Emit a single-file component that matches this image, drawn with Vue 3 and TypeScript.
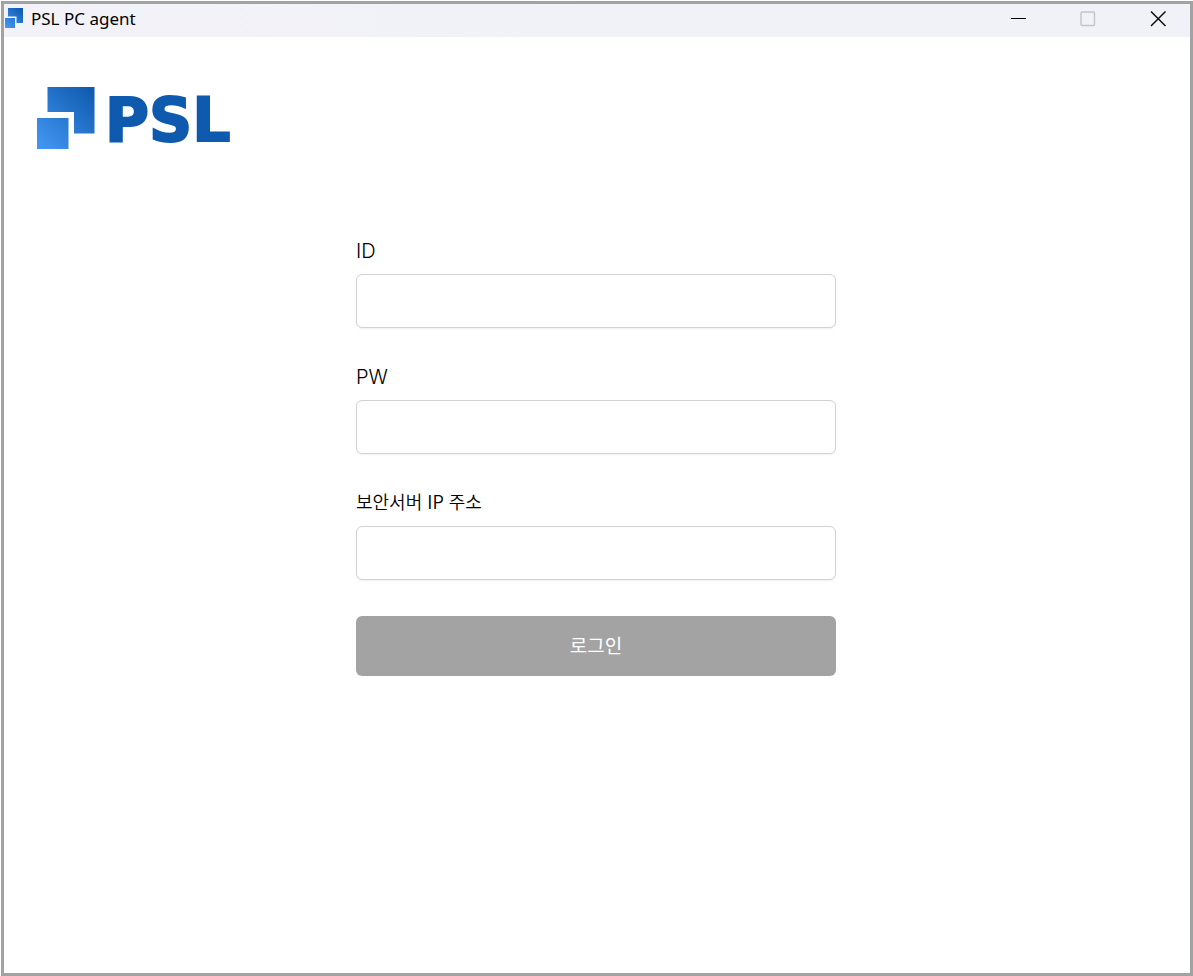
<script setup lang="ts">
import { computed, ref } from 'vue'

interface Field {
  id: string
  label: string
  type: string
  lang: string
}

const fields: Field[] = [
  { id: 'user-id', label: 'ID', type: 'text', lang: 'en' },
  { id: 'user-pw', label: 'PW', type: 'password', lang: 'en' },
  { id: 'server-ip', label: '보안서버 IP 주소', type: 'text', lang: 'ko' },
]

const values = ref<Record<string, string>>({ 'user-id': '', 'user-pw': '', 'server-ip': '' })
const ready = computed(() => fields.every((f) => values.value[f.id].trim() !== ''))
</script>

<template>
  <div class="window">
    <header class="titlebar">
      <svg class="app-icon" viewBox="0 0 18 20" aria-hidden="true">
        <defs>
          <linearGradient id="mark-small" gradientUnits="userSpaceOnUse" x1="1" y1="19" x2="17" y2="1">
            <stop offset="0" stop-color="#4398f4" />
            <stop offset="1" stop-color="#0d5aae" />
          </linearGradient>
        </defs>
        <path d="M3 0H18V15H11.500V8.500H3ZM0 10H10V20H0Z" fill="url(#mark-small)" />
      </svg>
      <span class="title">PSL PC agent</span>
      <div class="controls">
        <button type="button" aria-label="Minimize">
          <svg viewBox="0 0 16 16"><path d="M0 7.500H15" stroke="#000" /></svg>
        </button>
        <button type="button" aria-label="Maximize" disabled>
          <svg viewBox="0 0 16 16">
            <rect x="1" y="1" width="13.500" height="13.500" rx="1" fill="none" stroke="#c4c5c9" stroke-width="1.400" />
          </svg>
        </button>
        <button type="button" aria-label="Close">
          <svg viewBox="0 0 16 16"><path d="M1 .5L15.500 15M15.500 .5L1 15" stroke="#111" stroke-width="1.500" /></svg>
        </button>
      </div>
    </header>

    <main class="content">
      <div class="logo">
        <svg class="mark" viewBox="0 0 58 62" aria-hidden="true">
          <defs>
            <linearGradient id="mark-large" gradientUnits="userSpaceOnUse" x1="3" y1="60" x2="56" y2="2">
              <stop offset="0" stop-color="#4296f3" />
              <stop offset="1" stop-color="#0e5aad" />
            </linearGradient>
          </defs>
          <path d="M10.500 0H57.500V46.500H37V25H10.500ZM0 31H31.500V62H0Z" fill="url(#mark-large)" />
        </svg>
        <span class="wordmark">PSL</span>
      </div>

      <form class="login" @submit.prevent>
        <div v-for="field in fields" :key="field.id" class="field">
          <label :for="field.id" :lang="field.lang">{{ field.label }}</label>
          <input :id="field.id" v-model="values[field.id]" :type="field.type" />
        </div>
        <button class="submit" type="submit" :disabled="!ready">로그인</button>
      </form>
    </main>
  </div>
</template>

<style>
body {
  margin: 0;
  background: #fff;
}
</style>

<style scoped>
.window {
  box-sizing: border-box;
  display: flex;
  flex-direction: column;
  min-height: calc(100vh - 1px);
  margin: 1px 0 0 1px;
  border: 3px solid #a1a2a2;
  background: #fff;
  font-family: "Noto Sans CJK KR", sans-serif;
}

.titlebar {
  display: flex;
  align-items: center;
  height: 33px;
  padding-left: 1px;
  background: linear-gradient(90deg, #f2f2f8, #f0f2f7);
}

.app-icon {
  width: 18px;
  height: 20px;
  margin-bottom: 6px;
}

.title {
  margin-left: 8px;
  padding-bottom: 4px;
  color: #000;
  font: 17px/24px "Noto Sans", "Open Sans", sans-serif;
}

.controls {
  display: flex;
  margin-left: auto;
}

.controls button {
  display: flex;
  align-items: center;
  justify-content: center;
  width: 69px;
  height: 30px;
  margin-bottom: 4px;
  padding: 0;
  border: 0;
  background: none;
}

.controls button:last-child {
  width: 64px;
  margin-left: 4px;
}

.controls svg {
  width: 16px;
  height: 16px;
}

.content {
  flex: 1;
  padding: 50px 35px 50px 33px;
}

.logo {
  display: flex;
  align-items: center;
  height: 62px;
}

.mark {
  width: 58px;
  height: 62px;
}

.wordmark {
  margin-left: 10px;
  padding-top: 4px;
  color: #0e5aae;
  font: 700 60px/62px "DejaVu Sans", sans-serif;
  -webkit-text-stroke: 2px #0e5aae;
}

.login {
  display: flex;
  flex-direction: column;
  gap: 36px;
  width: 480px;
  max-width: 100%;
  margin: 89px auto 0;
}

.field {
  display: flex;
  flex-direction: column;
  gap: 10px;
}

.field label {
  min-height: 26px;
  color: #000;
  font-family: Inter, sans-serif;
  font-size: 20px;
  font-weight: 300;
  line-height: 26px;
}

.field label:lang(ko) {
  font-family: "Noto Sans CJK KR", sans-serif;
  font-size: 18px;
  font-weight: 350;
  line-height: 22px;
}

.field input {
  box-sizing: border-box;
  width: 100%;
  height: 54px;
  padding: 0 16px;
  border: 1px solid #d1d2d4;
  border-radius: 6px;
  outline: none;
  background: #fff;
  box-shadow: 0 1px 2px rgba(0, 0, 0, 0.06);
  font: inherit;
  font-size: 18px;
}

.submit {
  height: 60px;
  padding: 0 0 4px;
  border: 0;
  border-radius: 6px;
  background: #a3a3a3;
  color: #fff;
  font-family: inherit;
  font-size: 19px;
}
</style>
